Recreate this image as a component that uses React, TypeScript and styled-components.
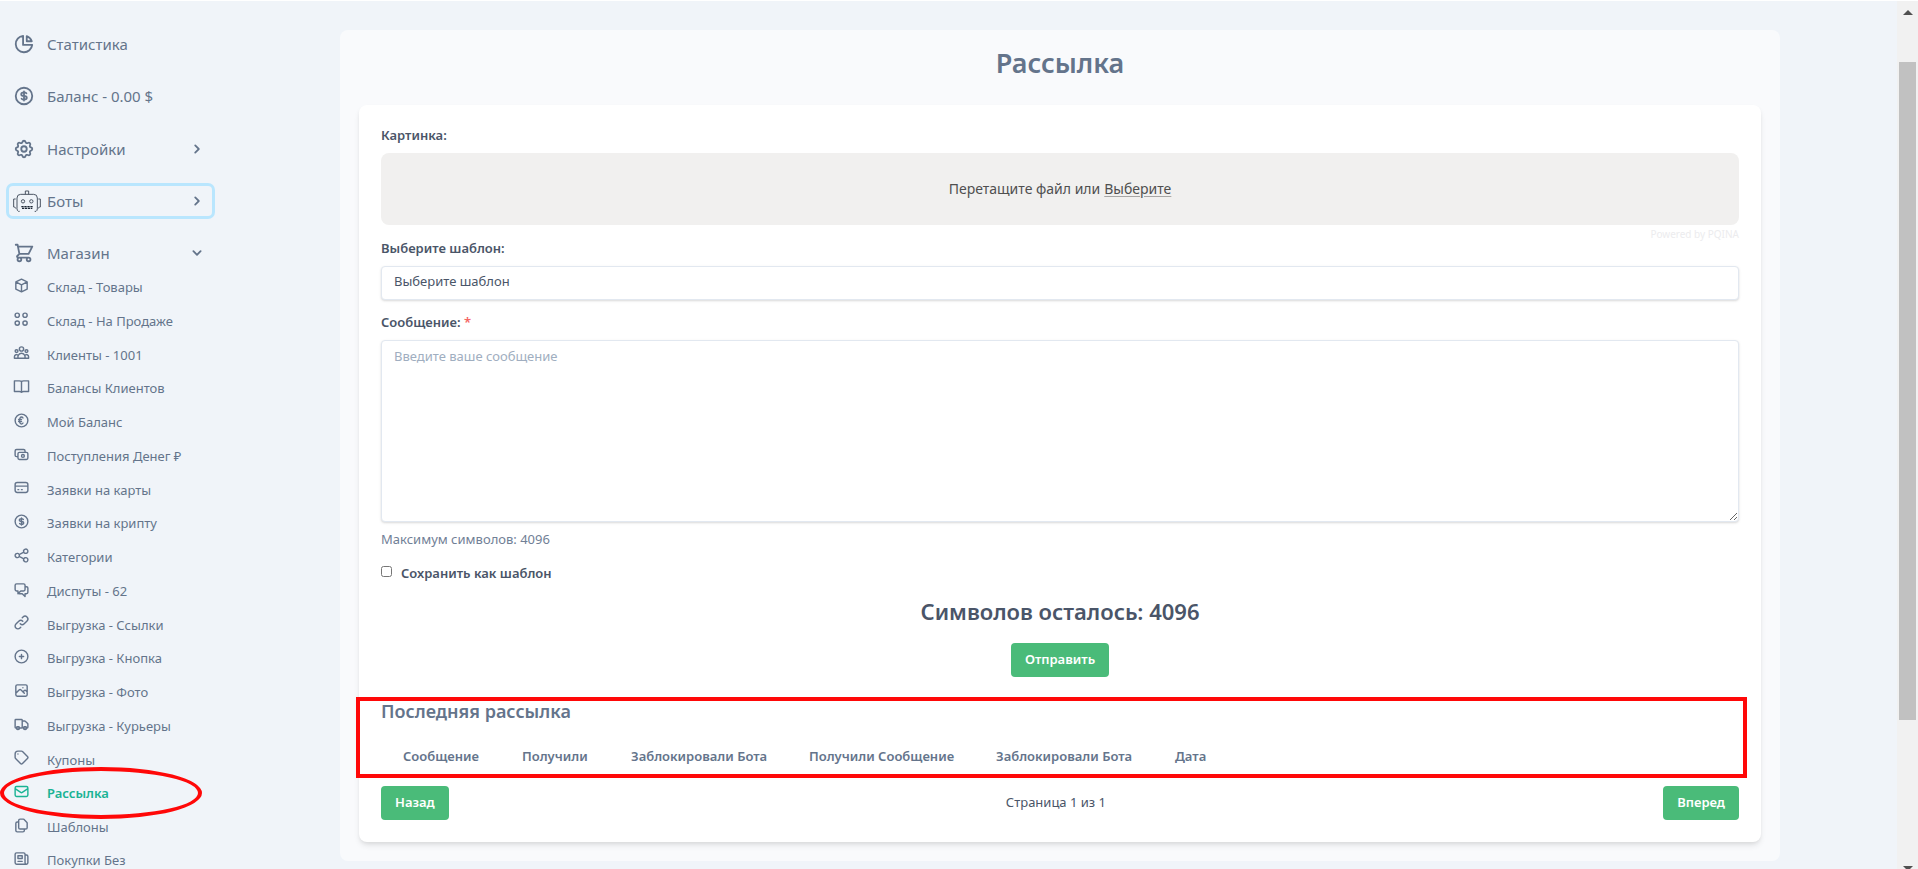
import React from 'react';
import styled, { createGlobalStyle, css } from 'styled-components';
import {
  HiChevronDown,
  HiChevronRight,
  HiOutlineCash,
  HiOutlineChartPie,
  HiOutlineChatAlt2,
  HiOutlineCog,
  HiOutlineCreditCard,
  HiOutlineCube,
  HiOutlineCurrencyDollar,
  HiOutlineCurrencyEuro,
  HiOutlineDocumentDuplicate,
  HiOutlineLink,
  HiOutlineMail,
  HiOutlineNewspaper,
  HiOutlinePhotograph,
  HiOutlinePlusCircle,
  HiOutlineShare,
  HiOutlineShoppingCart,
  HiOutlineTag,
  HiOutlineTruck,
  HiOutlineUserGroup,
} from 'react-icons/hi';

const color = {
  page: '#f0f4f9',
  panel: '#f9fafc',
  muted: '#64748b',
  text: '#4a5568',
  border: '#e2e8f0',
  green: '#4abb79',
  active: '#1ab394',
  mark: '#ff0808',
};

const GlobalStyle = createGlobalStyle`
  * { box-sizing: border-box; }
  body {
    margin: 0;
    background: ${color.page};
    color: ${color.text};
    font-family: "Noto Sans", "Open Sans", sans-serif;
    font-size: 13px;
    line-height: 18px;
  }
  button, select, textarea { font: inherit; color: inherit; }
  a { color: inherit; text-decoration: none; }
`;

const Shell = styled.div`
  display: flex;
  height: 100vh;
  overflow: hidden;
  border-top: 1px solid #fff;
`;

/* Sidebar */

const Sidebar = styled.nav`
  flex: none;
  width: 223px;
  padding: 29px 11px 0 9px;
  color: ${color.muted};
`;

const MenuList = styled.ul`
  display: flex;
  flex-direction: column;
  gap: 22px;
  margin: 0;
  padding: 0;
  list-style: none;
`;

const menuEntry = css<{ $focused?: boolean }>`
  display: flex;
  align-items: center;
  width: 100%;
  height: 30px;
  padding: 0;
  border: 0;
  border-radius: 4px;
  background: none;
  font-size: 15px;
  text-align: left;
  box-shadow: ${(p) => (p.$focused ? '0 0 0 3px #b9e6fe' : 'none')};
`;

const MenuLink = styled.a`
  ${menuEntry}
  padding-bottom: 2px;
`;
const MenuButton = styled.button`${menuEntry}`;

const MenuIcon = styled.span`
  display: flex;
  flex: none;
  width: 38px;
  padding-left: 4px;
  svg { flex: none; }
`;

const Chevron = styled.span`
  display: flex;
  margin-left: auto;
  padding-right: 6px;
`;

const SubList = styled.ul`
  margin: 2px 0 0;
  padding: 0;
  list-style: none;
`;

const SubItem = styled.li`
  position: relative;
  height: 34px;
  &:nth-child(4n + 3) { height: 33px; }
  &:last-child { height: 32px; }
`;

const SubLink = styled.a<{ $active?: boolean }>`
  display: flex;
  align-items: center;
  height: 100%;
  color: ${(p) => (p.$active ? color.active : 'inherit')};
  font-weight: ${(p) => (p.$active ? 600 : 400)};
  white-space: nowrap;
`;

const SubIcon = styled(MenuIcon)`
  padding-bottom: 4px;
`;

const Ellipse = styled.span`
  position: absolute;
  inset: -9px 10px -9px -9px;
  border: 4px solid ${color.mark};
  border-radius: 50%;
  pointer-events: none;
`;

/* Content */

const Main = styled.main`
  flex: 1;
  min-width: 0;
  padding-top: 29px;
`;

const Panel = styled.div`
  max-width: 1440px;
  margin: 0 auto;
  padding: 13px 19px 19px;
  border-radius: 8px;
  background: ${color.panel};
`;

const Title = styled.h1`
  margin: 0 0 22px;
  color: ${color.muted};
  font-size: 27px;
  font-weight: 600;
  line-height: 40px;
  text-align: center;
`;

const Card = styled.div`
  padding: 22px;
  border-radius: 8px;
  background: #fff;
  box-shadow: 0 4px 6px -1px rgba(0, 0, 0, 0.1), 0 2px 4px -1px rgba(0, 0, 0, 0.06);
`;

const Label = styled.label`
  display: block;
  margin-bottom: 10px;
  font-weight: 600;
  line-height: 16px;
`;

const Required = styled.span`
  color: #f56565;
`;

const DropZone = styled.div`
  display: flex;
  align-items: center;
  justify-content: center;
  height: 72px;
  border-radius: 8px;
  background: #f1f0ef;
  color: #4f4f4f;
  font-size: 14px;
`;

const Browse = styled.button`
  margin: 0 0 0 4px;
  padding: 0;
  border: 0;
  background: none;
  text-decoration: underline;
  text-decoration-color: #a7a6a5;
  text-underline-offset: 2px;
`;

const Credit = styled.a`
  display: block;
  padding-top: 3px;
  color: #ececee !important;
  font-size: 10px;
  line-height: 12px;
  text-align: right;
`;

const control = css`
  display: block;
  width: 100%;
  border: 1px solid ${color.border};
  border-radius: 4px;
  background: #fff;
  box-shadow: 0 1px 3px rgba(0, 0, 0, 0.1), 0 1px 2px rgba(0, 0, 0, 0.06);
`;

const Select = styled.select`
  ${control}
  height: 34px;
  margin-bottom: 14px;
  padding: 0 12px 4px;
  appearance: none;
`;

const TextArea = styled.textarea`
  ${control}
  height: 182px;
  padding: 6px 12px;
  resize: vertical;
  &::placeholder { color: #a0aec0; }
`;

const Hint = styled.p`
  margin: 8px 0 14px;
  color: #718096;
  line-height: 18px;
`;

const CheckRow = styled.div`
  display: flex;
  gap: 9px;
  padding-top: 2px;
`;

const CheckBox = styled.input`
  width: 11px;
  height: 11px;
  margin: 2px 0 0;
`;

const CheckLabel = styled.label`
  font-weight: 600;
`;

const Counter = styled.p`
  margin: 13px 0 16px;
  font-size: 22px;
  font-weight: 600;
  line-height: 32px;
  text-align: center;
`;

const Button = styled.button`
  height: 34px;
  padding: 0 14px 2px;
  border: 0;
  border-radius: 4px;
  background: ${color.green};
  color: #fff;
  font-weight: 600;
`;

const Submit = styled(Button)`
  display: block;
  margin: 0 auto;
`;

const History = styled.section`
  position: relative;
  margin-top: 22px;
  color: ${color.muted};
`;

const Outline = styled.span`
  position: absolute;
  inset: -2px -8px 1px -25px;
  border: 4px solid ${color.mark};
  pointer-events: none;
`;

const HistoryTitle = styled.h2`
  margin: 0 0 12px;
  font-size: 18px;
  font-weight: 600;
  line-height: 24px;
`;

const Table = styled.table`
  border-collapse: collapse;
`;

const HeadCell = styled.th<{ $width: number }>`
  min-width: ${(p) => p.$width}px;
  height: 44px;
  padding: 0 19px 2px 22px;
  font-weight: 600;
  text-align: left;
  white-space: nowrap;
`;

const Pager = styled.div`
  display: flex;
  align-items: center;
  justify-content: space-between;
  margin-top: 7px;
`;

const PageCount = styled.span`
  padding-bottom: 3px;
`;

/* Scroll bar */

const ScrollTrack = styled.div`
  display: flex;
  flex: none;
  flex-direction: column;
  align-items: center;
  width: 21px;
  padding-top: 9px;
  background: #f1f1f1;
`;

const Arrow = styled.span<{ $down?: boolean }>`
  border: 5px solid transparent;
  border-top-width: ${(p) => (p.$down ? 5 : 0)}px;
  border-bottom-width: ${(p) => (p.$down ? 0 : 5)}px;
  border-top-color: #505050;
  border-bottom-color: #505050;
`;

const Thumb = styled.div`
  flex: none;
  width: 17px;
  height: 76.6%;
  margin: 47px 0 auto;
  background: #c1c1c1;
`;

const BottomArrow = styled.div`
  display: flex;
  height: 3px;
`;

function RobotIcon() {
  return (
    <svg width="28" height="22" viewBox="0 0 84 66" fill="none" stroke="#4b5563" strokeWidth="3">
      <path d="M37 13V3h10v10" />
      <path d="M20 64h-4q-4-2-4-8V24q0-11 11-11h39q11 0 11 11v32q0 6-4 8h-4" />
      <path d="M8 27H2v24h3l4 5M76 27h6v24h-3l-4 5" />
      <circle cx="30" cy="34" r="5" />
      <circle cx="55" cy="34" r="5" />
      <path d="M25 50h35M27 55h31" stroke="#1f2937" strokeWidth="4" strokeDasharray="7 2" />
    </svg>
  );
}

const outline = {
  width: 17,
  height: 17,
  viewBox: '0 0 24 24',
  fill: 'none',
  stroke: 'currentColor',
  strokeWidth: 2,
};

function CirclesIcon() {
  return (
    <svg {...outline}>
      <circle cx="6" cy="6" r="3" />
      <circle cx="17" cy="6" r="3" />
      <circle cx="6" cy="17" r="3" />
      <circle cx="17" cy="17" r="3" />
    </svg>
  );
}

function BookIcon() {
  return (
    <svg {...outline} strokeLinejoin="round">
      <path d="M12 5q-1-1-3-1H2v15h7q2 0 3 1q1-1 3-1h7V4h-7q-2 0-3 1zV20" />
    </svg>
  );
}

const s = 17;
const shopLinks: { label: string; icon: React.ReactNode; active?: boolean }[] = [
  { label: 'Склад - Товары', icon: <HiOutlineCube size={s} /> },
  { label: 'Склад - На Продаже', icon: <CirclesIcon /> },
  { label: 'Клиенты - 1001', icon: <HiOutlineUserGroup size={s} /> },
  { label: 'Балансы Клиентов', icon: <BookIcon /> },
  { label: 'Мой Баланс', icon: <HiOutlineCurrencyEuro size={s} /> },
  { label: 'Поступления Денег ₽', icon: <HiOutlineCash size={s} /> },
  { label: 'Заявки на карты', icon: <HiOutlineCreditCard size={s} /> },
  { label: 'Заявки на крипту', icon: <HiOutlineCurrencyDollar size={s} /> },
  { label: 'Категории', icon: <HiOutlineShare size={s} /> },
  { label: 'Диспуты - 62', icon: <HiOutlineChatAlt2 size={s} /> },
  { label: 'Выгрузка - Ссылки', icon: <HiOutlineLink size={s} /> },
  { label: 'Выгрузка - Кнопка', icon: <HiOutlinePlusCircle size={s} /> },
  { label: 'Выгрузка - Фото', icon: <HiOutlinePhotograph size={s} /> },
  { label: 'Выгрузка - Курьеры', icon: <HiOutlineTruck size={s} /> },
  { label: 'Купоны', icon: <HiOutlineTag size={s} /> },
  { label: 'Рассылка', icon: <HiOutlineMail size={s} />, active: true },
  { label: 'Шаблоны', icon: <HiOutlineDocumentDuplicate size={s} /> },
  { label: 'Покупки Без', icon: <HiOutlineNewspaper size={s} /> },
];

const columns: [string, number][] = [
  ['Сообщение', 119],
  ['Получили', 109],
  ['Заблокировали Бота', 178],
  ['Получили Сообщение', 187],
  ['Заблокировали Бота', 179],
  ['Дата', 76],
];

export default function App() {
  return (
    <Shell>
      <GlobalStyle />
      <Sidebar>
        <MenuList>
          <li>
            <MenuLink href="#stats">
              <MenuIcon><HiOutlineChartPie size={22} /></MenuIcon>
              Статистика
            </MenuLink>
          </li>
          <li>
            <MenuLink href="#balance">
              <MenuIcon><HiOutlineCurrencyDollar size={22} /></MenuIcon>
              Баланс - 0.00 $
            </MenuLink>
          </li>
          <li>
            <MenuButton type="button">
              <MenuIcon><HiOutlineCog size={22} /></MenuIcon>
              Настройки
              <Chevron><HiChevronRight size={18} /></Chevron>
            </MenuButton>
          </li>
          <li>
            <MenuButton type="button" $focused>
              <MenuIcon><RobotIcon /></MenuIcon>
              Боты
              <Chevron><HiChevronRight size={18} /></Chevron>
            </MenuButton>
          </li>
          <li>
            <MenuButton type="button">
              <MenuIcon><HiOutlineShoppingCart size={22} /></MenuIcon>
              Магазин
              <Chevron><HiChevronDown size={18} /></Chevron>
            </MenuButton>
            <SubList>
              {shopLinks.map(({ label, icon, active }) => (
                <SubItem key={label}>
                  <SubLink href="#shop" $active={active}>
                    <SubIcon>{icon}</SubIcon>
                    {label}
                  </SubLink>
                  {active && <Ellipse />}
                </SubItem>
              ))}
            </SubList>
          </li>
        </MenuList>
      </Sidebar>

      <Main>
        <Panel>
          <Title>Рассылка</Title>
          <Card>
            <Label as="div">Картинка:</Label>
            <DropZone>
              Перетащите файл или <Browse type="button">Выберите</Browse>
            </DropZone>
            <Credit href="#pqina">Powered by PQINA</Credit>

            <Label htmlFor="template">Выберите шаблон:</Label>
            <Select id="template">
              <option>Выберите шаблон</option>
            </Select>

            <Label htmlFor="message">
              Сообщение: <Required>*</Required>
            </Label>
            <TextArea id="message" placeholder="Введите ваше сообщение" />
            <Hint>Максимум символов: 4096</Hint>

            <CheckRow>
              <CheckBox type="checkbox" id="save" />
              <CheckLabel htmlFor="save">Сохранить как шаблон</CheckLabel>
            </CheckRow>

            <Counter>Символов осталось: 4096</Counter>
            <Submit type="button">Отправить</Submit>

            <History>
              <HistoryTitle>Последняя рассылка</HistoryTitle>
              <Table>
                <thead>
                  <tr>
                    {columns.map(([name, width], i) => (
                      <HeadCell key={i} $width={width}>{name}</HeadCell>
                    ))}
                  </tr>
                </thead>
              </Table>
              <Outline />
            </History>

            <Pager>
              <Button type="button">Назад</Button>
              <PageCount>Страница 1 из 1</PageCount>
              <Button type="button">Вперед</Button>
            </Pager>
          </Card>
        </Panel>
      </Main>

      <ScrollTrack aria-hidden="true">
        <Arrow />
        <Thumb />
        <BottomArrow><Arrow $down /></BottomArrow>
      </ScrollTrack>
    </Shell>
  );
}
